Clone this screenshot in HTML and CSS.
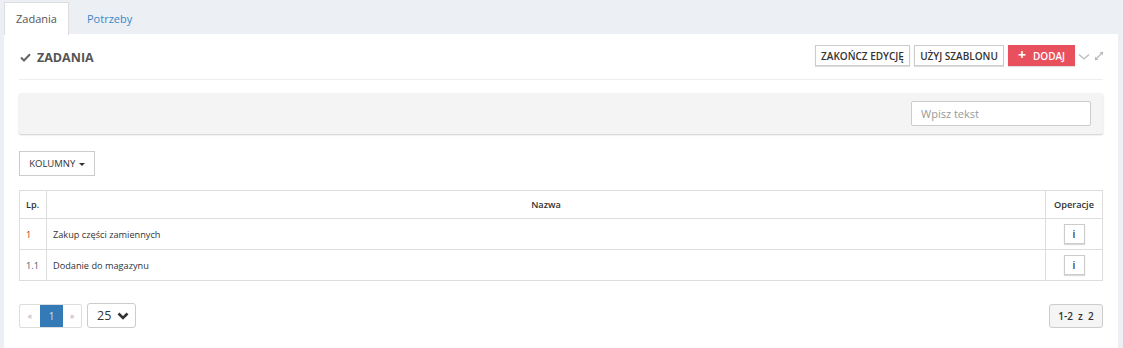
FILE: index.html
```html
<!DOCTYPE html>
<html lang="pl">
<head>
<meta charset="utf-8">
<link rel="stylesheet" href="styles.css">
</head>
<body>
<div class="page">
  <div class="tabs">
    <div class="tab active">Zadania</div>
    <div class="tab">Potrzeby</div>
  </div>
  <div class="panel">
    <div class="header">
      <div class="title">
        <svg class="check" width="11" height="9" viewBox="0 0 11 9"><path d="M1 4.5 L4 7.5 L10 1.2" fill="none" stroke="#666" stroke-width="2"/></svg>
        <span>ZADANIA</span>
      </div>
      <div class="actions">
        <button class="btn b1">ZAKOŃCZ EDYCJĘ</button>
        <button class="btn b2">UŻYJ SZABLONU</button>
        <button class="btn btn-red"><span class="plus">+</span>DODAJ</button>
        <svg class="chev" width="12" height="8" viewBox="0 0 12 8"><path d="M1 1.5 L6 6 L11 1.5" fill="none" stroke="#bbb" stroke-width="1.3"/></svg>
        <svg class="expand" width="10" height="10" viewBox="0 0 10 10"><path d="M1 9 L9 1" stroke="#bbb" stroke-width="1.2"/><path d="M5.5 1 H9 V4.5 Z" fill="#bbb"/><path d="M1 5.5 V9 H4.5 Z" fill="#bbb"/></svg>
      </div>
    </div>
    <div class="filter">
      <input class="search" type="text" placeholder="Wpisz tekst">
    </div>
    <div class="colbar">
      <button class="btn btn-cols">KOLUMNY <span class="caret"></span></button>
    </div>
    <table class="grid">
      <thead>
        <tr><th class="c-lp">Lp.</th><th class="c-name">Nazwa</th><th class="c-op">Operacje</th></tr>
      </thead>
      <tbody>
        <tr><td class="lp red">1</td><td>Zakup części zamiennych</td><td class="op"><span class="ibtn">i</span></td></tr>
        <tr><td class="lp">1.1</td><td>Dodanie do magazynu</td><td class="op"><span class="ibtn">i</span></td></tr>
      </tbody>
    </table>
    <div class="footer">
      <div class="pager">
        <div class="pg">
          <span class="pgi">«</span><span class="pgi cur">1</span><span class="pgi">»</span>
        </div>
        <div class="sel">25
          <svg width="12" height="8" viewBox="0 0 12 8"><path d="M1.5 1.5 L6 6 L10.5 1.5" fill="none" stroke="#333" stroke-width="2.6"/></svg>
        </div>
      </div>
      <div class="count">1-2 &nbsp;z &nbsp;2</div>
    </div>
  </div>
</div>
</body>
</html>
```
FILE: styles.css
```css
* { box-sizing: border-box; }
html, body { margin: 0; padding: 0; }
body {
  background: #eceff4;
  font-family: "Open Sans", "Noto Sans", sans-serif;
  color: #333;
  width: 1123px;
  height: 348px;
  overflow: hidden;
}
.page { padding: 0 5px 0 4px; }
.tabs {
  display: flex;
  height: 34px;
  padding-top: 2px;
}
.tab {
  font-size: 11px;
  padding: 0 14px;
  line-height: 31px;
  color: #3a87c8;
  border: 1px solid transparent;
  border-bottom: none;
}
.tab.active {
  background: #fff;
  color: #555;
  border-color: #ddd;
  height: 33px;
  width: 65px;
  padding: 0;
  text-align: center;
}
.tab + .tab { padding-left: 17px; }
.panel {
  background: #fff;
  padding: 0 15px 0 15px;
  height: 320px;
}
.header {
  display: flex;
  justify-content: space-between;
  align-items: center;
  height: 46px;
  border-bottom: 1px solid #eee;
  padding-top: 1px;
}
.title {
  display: flex;
  align-items: center;
  gap: 6px;
  font-size: 12.5px;
  font-weight: 700;
  color: #555;
  padding-left: 1px;
}
.actions {
  display: flex;
  align-items: center;
  gap: 4px;
  margin-top: -3px;
  margin-right: -1px;
}
.btn {
  font-family: inherit;
  font-size: 10px;
  font-weight: 600;
  color: #333;
  background: #fff;
  border: 1px solid #ccc;
  box-shadow: 0 1px 1px rgba(0,0,0,0.12);
  height: 21px;
  padding: 0;
  cursor: pointer;
  white-space: nowrap;
}
.b1 { width: 95px; }
.b2 { width: 90px; }
.btn-red {
  background: #e9505d;
  border-color: #e9505d;
  color: #fff;
  width: 67px;
}
.plus { font-weight: 700; font-size: 14px; margin-right: 7px; line-height: 10px; }
.chev { margin-left: -1px; margin-top: 2px; }
.filter {
  margin-top: 13px;
  height: 41px;
  background: #f4f4f4;
  border-radius: 2px;
  box-shadow: 0 1px 2px rgba(0,0,0,0.2);
  display: flex;
  justify-content: flex-end;
  align-items: center;
  padding-right: 12px;
}
.search {
  width: 180px;
  height: 25px;
  border: 1px solid #ccc;
  border-radius: 2px;
  font-family: inherit;
  font-size: 11px;
  padding: 0 9px;
  color: #555;
}
.search::placeholder { color: #999; }
.colbar { margin-top: 16px; height: 40px; }
.btn-cols {
  height: 25px;
  width: 76px;
  font-weight: 400;
  font-size: 9.5px;
  box-shadow: none;
  padding: 0 4px;
}
.caret {
  display: inline-block;
  width: 0; height: 0;
  border-left: 3.5px solid transparent;
  border-right: 3.5px solid transparent;
  border-top: 3.5px solid #333;
  vertical-align: middle;
  margin-left: 1px;
}
.grid {
  width: 100%;
  border-collapse: collapse;
  font-size: 9.2px;
}
.grid th, .grid td {
  border: 1px solid #ddd;
  padding: 0 6px;
}
.grid th { height: 28px; font-weight: 600; }
.grid td { height: 31px; }
.c-lp { width: 27px; text-align: left; }
.c-name { text-align: center; }
.c-op { width: 57px; text-align: center; }
.lp { color: #3d5a80; }
.lp.red { color: #b52a22; }
.op { text-align: center; }
.ibtn {
  display: inline-block;
  width: 21px;
  height: 20px;
  line-height: 19px;
  border: 1px solid #ccc;
  box-shadow: 0 1px 1px rgba(0,0,0,0.15);
  font-weight: 600;
  font-size: 10px;
  text-align: center;
  vertical-align: middle;
}
.footer {
  display: flex;
  justify-content: space-between;
  align-items: center;
  margin-top: 22px;
}
.pager { display: flex; align-items: center; gap: 5px; }
.pg {
  display: flex;
  border: 1px solid #ddd;
  border-radius: 2px;
  height: 24px;
  overflow: hidden;
}
.pgi {
  width: 20px;
  text-align: center;
  line-height: 22px;
  font-size: 9px;
  color: #aab;
}
.pgi:nth-child(2) { width: 23px; }
.pgi:nth-child(3) { width: 18px; }
.pgi.cur { background: #337ab7; color: #cfe2f3; font-size: 10px; }
.sel {
  width: 49px;
  height: 25px;
  border: 1px solid #ccc;
  border-radius: 3px;
  display: flex;
  align-items: center;
  justify-content: space-between;
  padding: 0 6px 0 9px;
  font-size: 12.5px;
  color: #333;
}
.count {
  width: 54px;
  height: 24px;
  background: #f5f5f5;
  border: 1px solid #ccc;
  border-radius: 3px;
  font-size: 10px;
  font-weight: 600;
  text-align: center;
  line-height: 22px;
  color: #333;
}
```
